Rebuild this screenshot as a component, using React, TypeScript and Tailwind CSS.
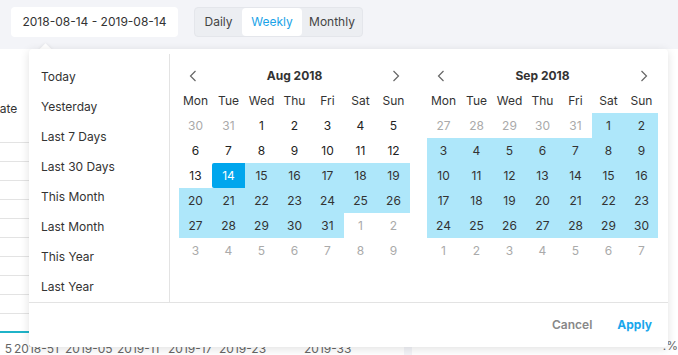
import React from 'react';

type Cell = { d: number; muted?: boolean; sel?: boolean; range?: boolean };

const WEEKDAYS = ['Mon', 'Tue', 'Wed', 'Thu', 'Fri', 'Sat', 'Sun'];
const PRESETS = ['Today', 'Yesterday', 'Last 7 Days', 'Last 30 Days', 'This Month', 'Last Month', 'This Year', 'Last Year'];

function buildAug(): Cell[] {
  const cells: Cell[] = [{ d: 30, muted: true }, { d: 31, muted: true }];
  for (let d = 1; d <= 31; d++) cells.push({ d, sel: d === 14, range: d > 14 });
  for (let d = 1; cells.length < 42; d++) cells.push({ d, muted: true });
  return cells;
}

function buildSep(): Cell[] {
  const cells: Cell[] = [27, 28, 29, 30, 31].map((d) => ({ d, muted: true }));
  for (let d = 1; d <= 30; d++) cells.push({ d, range: true });
  for (let d = 1; cells.length < 42; d++) cells.push({ d, muted: true });
  return cells;
}

function Chevron({ dir }: { dir: 'left' | 'right' }) {
  return (
    <svg width="8" height="12" viewBox="0 0 8 12" fill="none" stroke="#666" strokeWidth="1.2">
      {dir === 'left' ? <path d="M6.5 1 1.5 6l5 5" /> : <path d="M1.5 1l5 5-5 5" />}
    </svg>
  );
}

function Month({ title, cells }: { title: string; cells: Cell[] }) {
  return (
    <div className="w-[231px]">
      <div className="h-[25px] flex items-center justify-between px-[10px]">
        <Chevron dir="left" />
        <span className="text-[12px] font-bold text-[#333]">{title}</span>
        <Chevron dir="right" />
      </div>
      <div className="grid grid-cols-7">
        {WEEKDAYS.map((w) => (
          <div key={w} className="h-[25px] flex items-center justify-center text-[12px] text-[#333]">
            {w}
          </div>
        ))}
        {cells.map((c, i) => (
          <div
            key={i}
            className={
              'h-[25px] flex items-center justify-center text-[12px] ' +
              (c.sel
                ? 'bg-[#00a6ed] text-white rounded-l-[2px]'
                : c.range
                  ? 'bg-[#aee7fa] text-[#333]'
                  : c.muted
                    ? 'text-[#aaa]'
                    : 'text-[#222]')
            }
          >
            {c.d}
          </div>
        ))}
      </div>
    </div>
  );
}

export default function App() {
  return (
    <div className="relative w-[678px] h-[355px] overflow-hidden bg-[#f3f4f8] font-['Inter',sans-serif] flex flex-col">
      {/* top bar */}
      <div className="h-[49px] shrink-0 flex items-start pt-[7px] pl-[11px] gap-4">
        <div className="h-[30px] w-[167px] bg-white rounded flex items-center justify-center text-[12px] text-[#333]">
          2018-08-14 - 2019-08-14
        </div>
        <div className="h-[30px] flex rounded bg-[#eceef2] border border-[#e4e6eb] text-[12px] text-[#444]">
          <div className="w-[47px] flex items-center justify-center">Daily</div>
          <div className="w-[60px] flex items-center justify-center bg-white rounded text-[#1aa3e8]">Weekly</div>
          <div className="w-[60px] flex items-center justify-center">Monthly</div>
        </div>
      </div>

      {/* page cards behind the picker */}
      <div className="flex-1 flex gap-2">
        <div className="w-[404px] bg-white flex flex-col overflow-hidden">
          <div className="h-[93px] pt-[51px]">
            <div className="ml-[-8px] whitespace-nowrap text-[12px] text-[#333]">Rate</div>
          </div>
          <div className="flex flex-col">
            {Array.from({ length: 10 }).map((_, i) => (
              <div key={i} className="h-[19px] border-t border-[#e3e3e3]" />
            ))}
          </div>
          <div className="mt-[-1px] h-[2px] bg-[#1fb3c8]" />
          <div className="mt-[7px] ml-[-3px] flex whitespace-nowrap text-[12px] text-[#666]">
            <span className="w-[15px] flex justify-end">5</span>
            <span className="w-[51px] pl-[2px]">2018-51</span>
            <span className="w-[52px] pl-[2px]">2019-05</span>
            <span className="w-[51px] pl-[2px]">2019-11</span>
            <span className="w-[51px] pl-[2px]">2019-17</span>
            <span className="w-[85px] pl-[2px]">2019-23</span>
            <span className="pl-[2px]">2019-33</span>
          </div>
        </div>
        <div className="flex-1 bg-white flex flex-col justify-end items-end pb-[3px]">
          <span className="text-[12px] text-[#666]">.%</span>
        </div>
      </div>

      {/* date range picker popup */}
      <div className="absolute left-[41px] top-[45px] w-[9px] h-[9px] bg-white rotate-45 shadow-[0_0_4px_rgba(0,0,0,0.08)]" />
      <div className="absolute left-[29px] top-[49px] w-[639px] h-[298px] bg-white rounded shadow-[0_2px_10px_rgba(0,0,0,0.12)] flex flex-col">
        <div className="h-[253px] flex">
          <div className="w-[141px] mt-[5px] border-r border-[#e3e3e3] pt-[8px] pl-[12px] flex flex-col">
            {PRESETS.map((p) => (
              <div key={p} className="h-[30px] flex items-center text-[12px] text-[#333]">
                {p}
              </div>
            ))}
          </div>
          <div className="flex pl-[9px] pr-[10px] pt-[14px] gap-[17px]">
            <Month title="Aug 2018" cells={buildAug()} />
            <Month title="Sep 2018" cells={buildSep()} />
          </div>
        </div>
        <div className="flex-1 border-t border-[#e3e3e3] flex items-center justify-end pr-[16px] gap-[25px] text-[12px] font-semibold">
          <span className="text-[#888]">Cancel</span>
          <span className="text-[#1aa7ec] font-bold">Apply</span>
        </div>
      </div>
    </div>
  );
}
